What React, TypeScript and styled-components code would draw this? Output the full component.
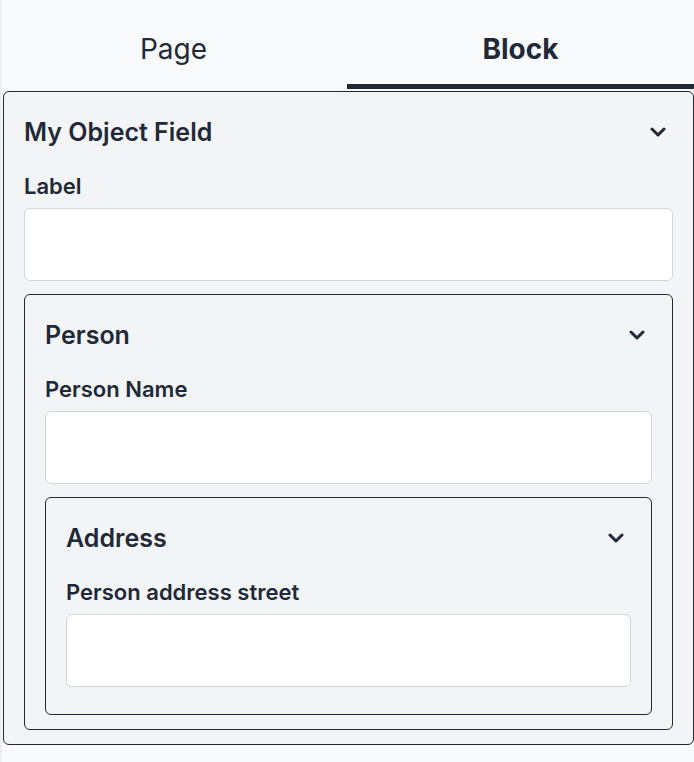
import styled, { createGlobalStyle } from "styled-components";

const GlobalStyle = createGlobalStyle`
  html, body {
    margin: 0;
    padding: 0;
    background: #f9fafb;
  }
  body {
    font-family: Inter, "Noto Sans", sans-serif;
    color: #1f2937;
  }
  * {
    box-sizing: border-box;
  }
`;

const Sidebar = styled.div`
  width: 694px;
  min-height: 762px;
  background: #f9fafb;
  border-left: 2px solid #eceef1;
`;

const Tabs = styled.div`
  display: grid;
  grid-template-columns: 1fr 1fr;
  height: 89px;
  margin-left: -2px;
  margin-bottom: 1px;
`;

const Tab = styled.button<{ $active?: boolean }>`
  display: flex;
  align-items: center;
  justify-content: center;
  padding: 13px 0 0;
  border: none;
  border-bottom: 5px solid ${(p) => (p.$active ? "#1f2937" : "transparent")};
  background: transparent;
  font-family: inherit;
  font-size: 28px;
  font-weight: ${(p) => (p.$active ? 700 : 400)};
  color: #1f2937;
  cursor: pointer;
`;

const Body = styled.div`
  padding: 1px 0 0 1px;
`;

const Card = styled.div`
  border: 1px solid #1f2937;
  border-radius: 6px;
  background: #f3f4f6;
  padding: 0 20px 14px;
`;

const CardHeader = styled.div`
  display: flex;
  align-items: center;
  justify-content: space-between;
  padding: 20px 7px 20px 0;
`;

const CardTitle = styled.h3`
  margin: 0;
  font-size: 25px;
  line-height: 40px;
  font-weight: 600;
`;

const Field = styled.div`
  display: flex;
  flex-direction: column;
  gap: 8px;
  margin-bottom: 13px;
`;

const Label = styled.label`
  font-size: 22px;
  line-height: 28px;
  font-weight: 600;
`;

const Input = styled.input`
  height: 73px;
  width: 100%;
  border: 1px solid #d1d5db;
  border-radius: 6px;
  background: #ffffff;
  font-family: inherit;
  font-size: 20px;
  padding: 0 16px;
`;

const Chevron = () => (
  <svg width="16" height="10" viewBox="0 0 16 10" fill="none">
    <polyline
      points="2,2 8,8 14,2"
      stroke="#1f2937"
      strokeWidth="3"
      strokeLinecap="round"
      strokeLinejoin="round"
    />
  </svg>
);

type ObjectFieldProps = {
  title: string;
  label: string;
  children?: React.ReactNode;
};

const ObjectField = ({ title, label, children }: ObjectFieldProps) => (
  <Card>
    <CardHeader>
      <CardTitle>{title}</CardTitle>
      <Chevron />
    </CardHeader>
    <Field>
      <Label>{label}</Label>
      <Input />
    </Field>
    {children}
  </Card>
);

export default function App() {
  return (
    <>
      <GlobalStyle />
      <Sidebar>
        <Tabs>
          <Tab>Page</Tab>
          <Tab $active>Block</Tab>
        </Tabs>
        <Body>
          <ObjectField title="My Object Field" label="Label">
            <ObjectField title="Person" label="Person Name">
              <ObjectField title="Address" label="Person address street" />
            </ObjectField>
          </ObjectField>
        </Body>
      </Sidebar>
    </>
  );
}
